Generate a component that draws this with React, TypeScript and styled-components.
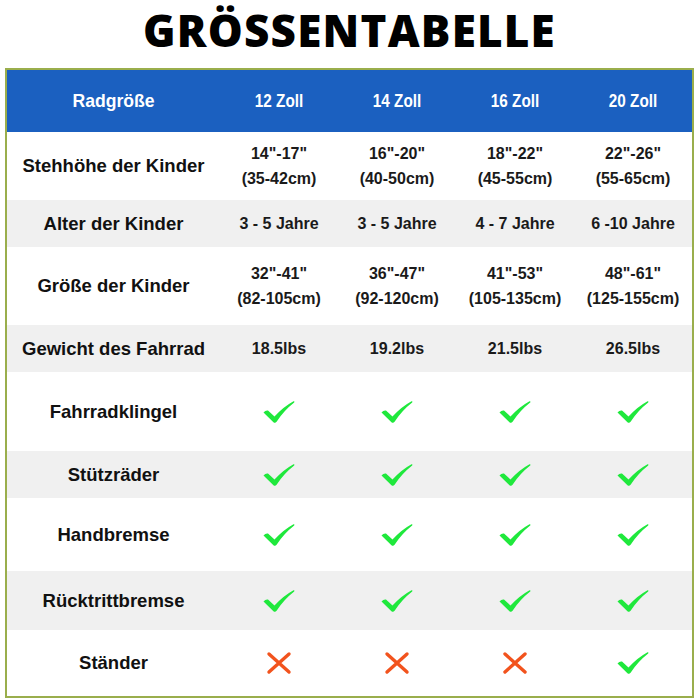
import React from "react";
import styled, { createGlobalStyle } from "styled-components";

const Global = createGlobalStyle`
  html, body { margin: 0; padding: 0; background: #fff; }
  body { width: 700px; height: 700px; overflow: hidden; }
`;

const Page = styled.div`
  width: 700px;
  height: 700px;
  box-sizing: border-box;
  padding: 0 6px 0 5px;
  display: flex;
  flex-direction: column;
`;

const Title = styled.h1`
  margin: 0;
  height: 68px;
  box-sizing: border-box;
  text-align: center;
  font-family: "Open Sans", "Liberation Sans", sans-serif;
  font-weight: 800;
  font-size: 44px;
  line-height: 60px;
  letter-spacing: 1.2px;
  color: #000;
`;

const Table = styled.div`
  border: 2px solid #9aae4c;
  display: flex;
  flex-direction: column;
`;

const Row = styled.div<{ $h: number; $bg: string }>`
  display: grid;
  grid-template-columns: 213px repeat(4, 1fr);
  height: ${(p) => p.$h}px;
  background: ${(p) => p.$bg};
  align-items: center;
`;

const HeadCell = styled.div<{ $narrow?: boolean }>`
  text-align: center;
  color: #fff;
  font-family: "Liberation Sans", Arial, sans-serif;
  font-weight: 700;
  font-size: ${(p) => (p.$narrow ? 18 : 18.5)}px;
  transform: scaleX(${(p) => (p.$narrow ? 0.85 : 0.95)});
`;

const Label = styled.div`
  text-align: center;
  color: #111;
  font-family: "Liberation Sans", Arial, sans-serif;
  font-weight: 700;
  font-size: 18.5px;
`;

const Cell = styled.div`
  text-align: center;
  color: #1a1a1a;
  font-family: "Liberation Sans", Arial, sans-serif;
  font-weight: 700;
  font-size: 16px;
  line-height: 25px;
  display: flex;
  flex-direction: column;
  align-items: center;
`;

const Check = () => (
  <svg width="34" height="24" viewBox="0 0 34 24">
    <path
      d="M1.5 12.5 Q3.5 10 6 10.5 L12.5 16.5 Q21 7 31.5 1.2 Q33 1 32.2 2.6 Q22 10.5 14.6 21.8 Q13 23.8 11.2 22 Z"
      fill="#1fe83c"
    />
  </svg>
);

const Cross = () => (
  <svg width="26" height="24" viewBox="0 0 26 24">
    <path d="M3 3 L23 21 M23 3 L3 21" stroke="#f2531d" strokeWidth="3.4" strokeLinecap="round" />
  </svg>
);

type Val = string | string[];

const rows: { label: string; h: number; bg: string; vals: Val[] }[] = [
  { label: "Stehhöhe der Kinder", h: 68, bg: "#fff", vals: [["14\"-17\"", "(35-42cm)"], ["16\"-20\"", "(40-50cm)"], ["18\"-22\"", "(45-55cm)"], ["22\"-26\"", "(55-65cm)"]] },
  { label: "Alter der Kinder", h: 47, bg: "#f0f0f0", vals: ["3 - 5 Jahre", "3 - 5 Jahre", "4 - 7 Jahre", "6 -10 Jahre"] },
  { label: "Größe der Kinder", h: 78, bg: "#fff", vals: [["32\"-41\"", "(82-105cm)"], ["36\"-47\"", "(92-120cm)"], ["41\"-53\"", "(105-135cm)"], ["48\"-61\"", "(125-155cm)"]] },
  { label: "Gewicht des Fahrrad", h: 47, bg: "#f0f0f0", vals: ["18.5lbs", "19.2lbs", "21.5lbs", "26.5lbs"] },
  { label: "Fahrradklingel", h: 79, bg: "#fff", vals: ["check", "check", "check", "check"] },
  { label: "Stützräder", h: 47, bg: "#f0f0f0", vals: ["check", "check", "check", "check"] },
  { label: "Handbremse", h: 73, bg: "#fff", vals: ["check", "check", "check", "check"] },
  { label: "Rücktrittbremse", h: 59, bg: "#f0f0f0", vals: ["check", "check", "check", "check"] },
  { label: "Ständer", h: 66, bg: "#fff", vals: ["cross", "cross", "cross", "check"] },
];

const renderVal = (v: Val) => {
  if (v === "check") return <Check />;
  if (v === "cross") return <Cross />;
  if (Array.isArray(v)) return v.map((t) => <span key={t}>{t}</span>);
  return <span>{v}</span>;
};

export default function App() {
  return (
    <Page>
      <Global />
      <Title>GRÖSSENTABELLE</Title>
      <Table>
        <Row $h={62} $bg="#1b60c0">
          <HeadCell>Radgröße</HeadCell>
          <HeadCell $narrow>12 Zoll</HeadCell>
          <HeadCell $narrow>14 Zoll</HeadCell>
          <HeadCell $narrow>16 Zoll</HeadCell>
          <HeadCell $narrow>20 Zoll</HeadCell>
        </Row>
        {rows.map((r) => (
          <Row key={r.label} $h={r.h} $bg={r.bg}>
            <Label>{r.label}</Label>
            {r.vals.map((v, i) => (
              <Cell key={i}>{renderVal(v)}</Cell>
            ))}
          </Row>
        ))}
      </Table>
    </Page>
  );
}
